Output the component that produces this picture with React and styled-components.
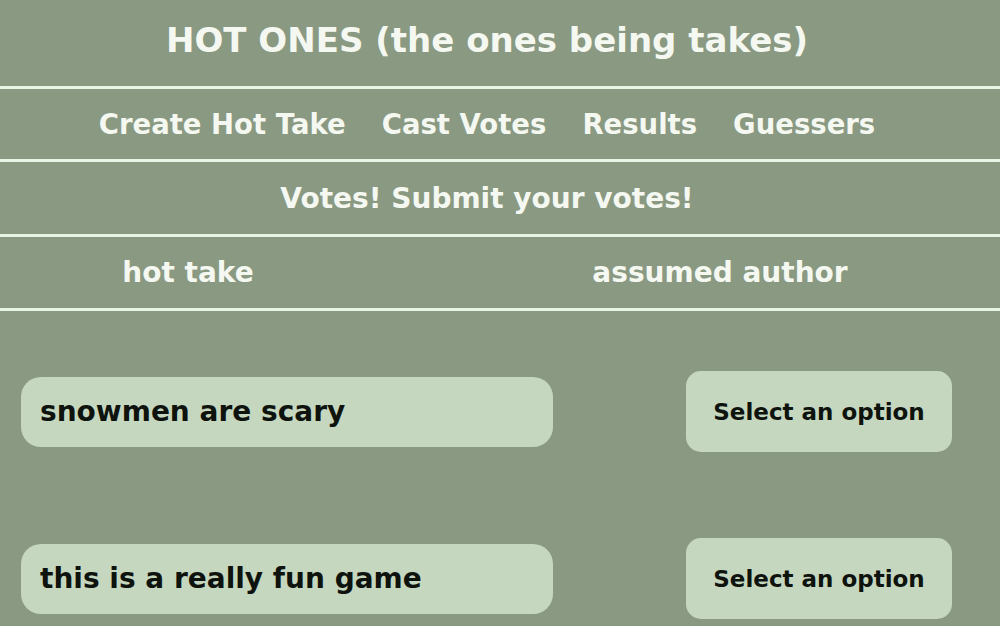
import React from "react";
import styled, { createGlobalStyle } from "styled-components";

const Global = createGlobalStyle`
  html, body { margin: 0; padding: 0; background: #8a9982; }
  body { font-family: "DejaVu Sans", "Liberation Sans", sans-serif; }
  * { box-sizing: border-box; }
`;

const Page = styled.div`
  width: 1000px;
  height: 626px;
  overflow: hidden;
  background: #8a9982;
  display: flex;
  flex-direction: column;
`;

const Band = styled.div`
  height: ${(p) => p.$h}px;
  border-bottom: 3px solid #e8f4e6;
  display: flex;
  align-items: center;
  justify-content: center;
  padding-right: ${(p) => p.$shift || 0}px;
  padding-bottom: ${(p) => p.$lift || 0}px;
  color: #f4f8f1;
  font-weight: 700;
  font-size: ${(p) => p.$size || 28}px;
  white-space: nowrap;
`;

const Title = styled.h1`
  margin: 0;
  font-size: 34px;
  font-weight: 700;
  color: #f4f8f1;
`;

const Nav = styled.nav`
  display: flex;
  gap: 36px;
  font-size: 27.5px;
`;

const NavItem = styled.span`
  color: #f4f8f1;
`;

const HeaderGrid = styled.div`
  width: 100%;
  height: 100%;
  display: grid;
  grid-template-columns: 376px 1fr;
  align-items: center;
`;

const HeaderCell = styled.div`
  text-align: center;
  padding-left: ${(p) => p.$pad || 0}px;
  font-size: 28px;
`;

const Rows = styled.div`
  display: flex;
  flex-direction: column;
  gap: 86px;
  padding: 60px 0 0 21px;
`;

const Row = styled.div`
  display: flex;
  align-items: center;
  height: 81px;
`;

const TakePill = styled.div`
  width: 532px;
  height: 70px;
  border-radius: 20px;
  background: #c6d7c0;
  display: flex;
  align-items: center;
  padding-left: 19px;
  font-size: 28px;
  font-weight: 700;
  color: #0e130d;
`;

const SelectBox = styled.div`
  margin-left: 133px;
  width: 266px;
  height: 81px;
  border-radius: 15px;
  background: #c6d7c0;
  display: flex;
  align-items: center;
  justify-content: center;
  font-size: 23px;
  font-weight: 700;
  color: #0e130d;
`;

const takes = ["snowmen are scary", "this is a really fun game"];

export default function App() {
  return (
    <Page>
      <Global />
      <Band $h={89} $shift={26} $lift={6}>
        <Title>HOT ONES (the ones being takes)</Title>
      </Band>
      <Band $h={73} $shift={26}>
        <Nav>
          <NavItem>Create Hot Take</NavItem>
          <NavItem>Cast Votes</NavItem>
          <NavItem>Results</NavItem>
          <NavItem>Guessers</NavItem>
        </Nav>
      </Band>
      <Band $h={75} $size={28} $shift={26}>
        Votes! Submit your votes!
      </Band>
      <Band $h={74}>
        <HeaderGrid>
          <HeaderCell>hot take</HeaderCell>
          <HeaderCell $pad={64}>assumed author</HeaderCell>
        </HeaderGrid>
      </Band>
      <Rows>
        {takes.map((t) => (
          <Row key={t}>
            <TakePill>{t}</TakePill>
            <SelectBox>Select an option</SelectBox>
          </Row>
        ))}
      </Rows>
    </Page>
  );
}
